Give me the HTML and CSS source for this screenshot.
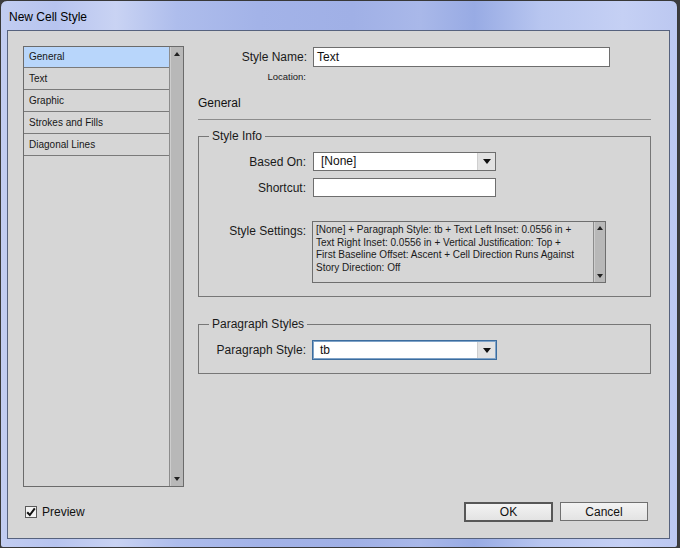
FILE: index.html
```html
<!DOCTYPE html>
<html lang="en">
<head>
  <meta charset="UTF-8">
  <title>New Cell Style</title>
  <link rel="stylesheet" href="styles.css">
</head>
<body>
  <div class="window">
    <div class="titlebar">New Cell Style</div>
    <div class="client">
      <div class="main">
        <div class="list">
          <ul class="items">
            <li class="active">General</li>
            <li>Text</li>
            <li>Graphic</li>
            <li>Strokes and Fills</li>
            <li>Diagonal Lines</li>
          </ul>
          <div class="vscroll">
            <span class="arrow up"></span>
            <span class="arrow down"></span>
          </div>
        </div>

        <div class="panel">
          <div class="row name-row">
            <label>Style Name:</label>
            <div class="textbox name-box">Text</div>
          </div>
          <div class="row loc-row">
            <label class="small">Location:</label>
          </div>
          <div class="section-title">General</div>
          <div class="rule"></div>

          <!-- Style Info -->
          <fieldset class="group info">
            <legend>Style Info</legend>
            <div class="grid">
              <label>Based On:</label>
              <div class="dropdown">
                <span class="value">[None]</span>
                <span class="drop-btn"><span class="caret"></span></span>
              </div>
              <label class="shortcut-label">Shortcut:</label>
              <div class="textbox shortcut"></div>
              <label class="settings-label">Style Settings:</label>
              <div class="settings">
                <div class="settings-text">[None] + Paragraph Style: tb + Text Left Inset: 0.0556 in +<br>Text Right Inset: 0.0556 in + Vertical Justification: Top +<br>First Baseline Offset: Ascent + Cell Direction Runs Against<br>Story Direction: Off</div>
                <div class="vscroll small-scroll">
                  <span class="arrow up"></span>
                  <span class="arrow down"></span>
                </div>
              </div>
            </div>
          </fieldset>

          <!-- Paragraph Styles -->
          <fieldset class="group para">
            <legend>Paragraph Styles</legend>
            <div class="grid">
              <label>Paragraph Style:</label>
              <div class="dropdown focused">
                <span class="value">tb</span>
                <span class="drop-btn"><span class="caret"></span></span>
              </div>
            </div>
          </fieldset>
        </div>
      </div>

      <div class="footer">
        <div class="check">
          <span class="box">
            <svg width="10" height="10" viewBox="0 0 10 10"><path d="M1.2 5.2 L3.8 8 L8.8 1.4" fill="none" stroke="#111" stroke-width="2"/></svg>
          </span>
          <span>Preview</span>
        </div>
        <div class="buttons">
          <button class="btn default">OK</button>
          <button class="btn">Cancel</button>
        </div>
      </div>
    </div>
  </div>
</body>
</html>
```

FILE: styles.css
```css
* {
  box-sizing: border-box;
}
body {
  margin: 0;
  background: #3c3c3e;
  font-family: "Liberation Sans", Arial, sans-serif;
  font-size: 12px;
  color: #111;
}
.window {
  width: 678px;
  height: 548px;
  border: 1px solid #383838;
  border-radius: 7px 7px 3px 3px;
  background:
    linear-gradient(90deg, #c2cdf1 0%, #b7c4ef 8%, #c9d3f3 17%, #aebdec 26%, #a3b3e8 38%, #a0b0e6 52%, #a9b8e9 62%, #98abe4 70%, #b8c6f0 80%, #c5d0f4 92%, #bcc8f1 100%);
  padding: 0 7px 8px 6px;
  display: flex;
  flex-direction: column;
}
.titlebar {
  height: 29px;
  padding: 2px 0 0 2px;
  display: flex;
  align-items: center;
  font-size: 12px;
  color: #000;
}
.client {
  height: 509px;
  border: 1px solid #56627e;
  background: #d6d6d6;
  padding: 15px 18px 0 15px;
  display: flex;
  flex-direction: column;
}
.main {
  display: flex;
  gap: 14px;
  height: 441px;
}

/* left list */
.list {
  width: 161px;
  border: 1px solid #6b6b6b;
  display: flex;
}
.items {
  flex: 1;
  list-style: none;
  margin: 0;
  padding: 0;
}
.items li {
  height: 22px;
  line-height: 21px;
  padding-left: 5px;
  border-bottom: 1px solid #7a7a7a;
  font-size: 10px;
  color: #161616;
}
.items li:first-child {
  height: 21px;
  line-height: 20px;
}
.items li.active {
  background: #b8d6fb;
}
.vscroll {
  width: 14px;
  background: #b8b8b8;
  border-left: 1px solid #8c8c8c;
  box-shadow: inset 1px 0 0 #cdcdcd;
  display: flex;
  flex-direction: column;
  justify-content: space-between;
  align-items: center;
  padding: 5px 0 5px 1px;
}
.arrow {
  width: 0;
  height: 0;
  border-left: 3px solid transparent;
  border-right: 3px solid transparent;
}
.arrow.up {
  border-bottom: 4px solid #222;
}
.arrow.down {
  border-top: 4px solid #222;
}

/* right panel */
.panel {
  flex: 1;
  display: flex;
  flex-direction: column;
}
.row {
  display: grid;
  grid-template-columns: 109px 297px;
  column-gap: 6px;
  align-items: center;
}
label {
  text-align: right;
  font-size: 12px;
  color: #1a1a1a;
}
.name-row {
  margin-top: 1px;
}
.textbox {
  height: 20px;
  border: 1px solid #6e6e6e;
  background: #fff;
  padding-left: 3px;
  line-height: 18px;
  font-size: 12px;
}
.loc-row {
  margin-top: 3px;
  height: 14px;
}
label.small {
  font-size: 9.5px;
  line-height: 14px;
  padding-right: 1px;
}
.section-title {
  margin-top: 12px;
  line-height: 14px;
  font-size: 12px;
}
.rule {
  margin-top: 9px;
  height: 1px;
  background: #8c8c8c;
}
.group {
  margin: 9px 0 0;
  padding: 9px 0 13px;
  border: 1px solid #777;
  min-width: 0;
}
.group legend {
  margin-left: 10px;
  padding: 0 3px;
  line-height: 14px;
  font-size: 12px;
  color: #1a1a1a;
}
.group.para {
  margin-top: 20px;
}
.grid {
  display: grid;
  grid-template-columns: 107px auto;
  column-gap: 7px;
  align-items: center;
  justify-content: start;
}
.dropdown {
  width: 183px;
  height: 19px;
  border: 1px solid #6e6e6e;
  background: #fff;
  display: flex;
}
.dropdown .value {
  flex: 1;
  padding-left: 7px;
  line-height: 17px;
  font-size: 12px;
}
.drop-btn {
  width: 18px;
  border-left: 1px solid #cfcfcf;
  background: #e2e2e2;
  display: flex;
  align-items: center;
  justify-content: center;
}
.caret {
  width: 0;
  height: 0;
  border-left: 4px solid transparent;
  border-right: 4px solid transparent;
  border-top: 5px solid #111;
}
.shortcut-label {
  margin-top: 7px;
}
.shortcut {
  width: 183px;
  height: 19px;
  margin-top: 7px;
}
.settings-label {
  align-self: start;
  margin-top: 27px;
}
.settings {
  margin-top: 24px;
  margin-left: -1px;
  width: 294px;
  height: 62px;
  border: 1px solid #6e6e6e;
  background: #d6d6d6;
  display: flex;
}
.settings-text {
  flex: 1;
  padding: 2px 0 0 3px;
  font-size: 10px;
  line-height: 12.6px;
  white-space: nowrap;
  overflow: hidden;
  color: #1a1a1a;
}
.small-scroll {
  width: 12px;
  padding: 4px 0 4px 1px;
}
.para .dropdown {
  width: 185px;
  height: 20px;
  margin-left: -1px;
  border-color: #3b6c9e;
  box-shadow: inset 0 0 0 1px #7fa3c8;
}
.para .dropdown .value {
  line-height: 18px;
  padding-left: 7px;
}
.para .drop-btn {
  margin: 1px 1px 1px 0;
}

/* footer */
.footer {
  display: flex;
  align-items: flex-start;
  margin-top: 15px;
}
.check {
  display: flex;
  align-items: center;
  gap: 5px;
  margin: 3px 0 0 2px;
  font-size: 12px;
}
.check .box {
  width: 12px;
  height: 12px;
  border: 1px solid #5a5a5a;
  background: #f3f3f3;
  display: flex;
  align-items: center;
  justify-content: center;
}
.buttons {
  margin-left: auto;
  margin-right: 3px;
  display: flex;
  gap: 7px;
  align-items: flex-start;
}
.btn {
  width: 88px;
  height: 19px;
  padding: 0;
  border: 1px solid #707070;
  background: linear-gradient(#f3f3f3, #e3e3e3);
  font-family: "Liberation Sans", Arial, sans-serif;
  font-size: 12px;
  color: #111;
}
.btn.default {
  width: 89px;
  height: 20px;
  border: 2px solid #575757;
}
```
